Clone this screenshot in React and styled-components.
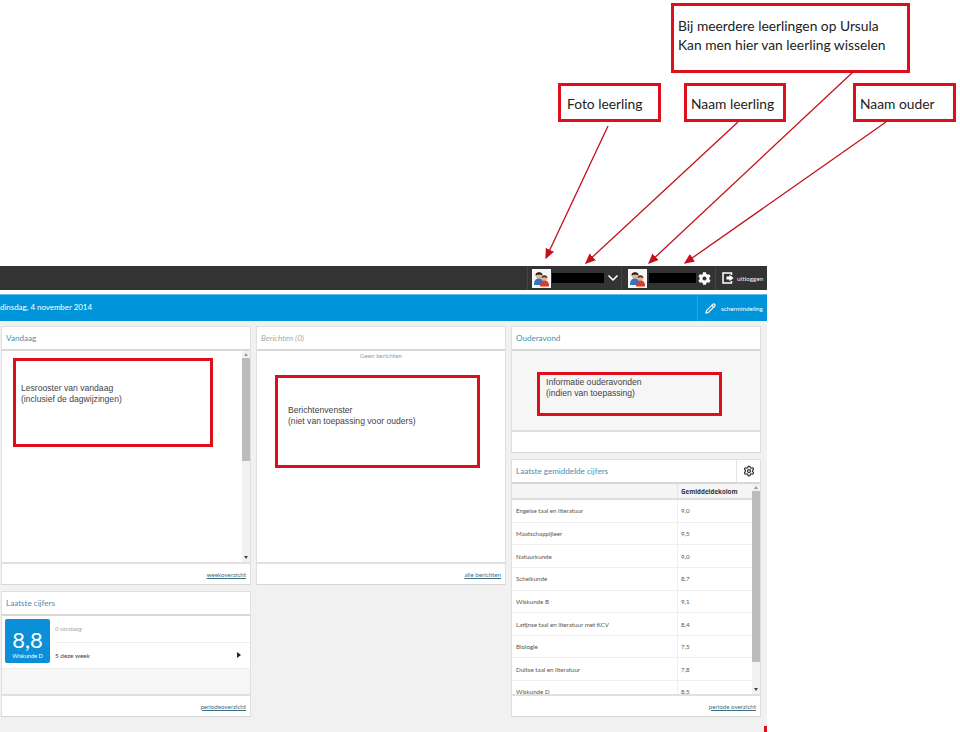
import React from "react";
import styled, { createGlobalStyle } from "styled-components";
import { ChevronDown, Settings, Pencil } from "lucide-react";
import { FaCog } from "react-icons/fa";

const GlobalStyle = createGlobalStyle`
  html, body {
    margin: 0;
    padding: 0;
    background: #fff;
    font-family: Lato, "Open Sans", "Liberation Sans", sans-serif;
  }
`;

const Page = styled.div`
  position: relative;
  width: 960px;
  height: 732px;
  overflow: hidden;
  background: #fff;
`;

const Notes = styled.div`
  height: 266px;
`;

const Callout = styled.div`
  position: absolute;
  left: ${(p) => p.$x}px;
  top: ${(p) => p.$y}px;
  width: ${(p) => p.$w}px;
  height: ${(p) => p.$h}px;
  box-sizing: border-box;
  border: 3px solid #dd0f1c;
  padding: ${(p) => p.$pad || "10px 4px"};
  font-family: Lato, "Liberation Sans", sans-serif;
  font-size: 13.8px;
  line-height: 19px;
  color: #222;
  white-space: nowrap;
`;

const Arrows = styled.svg`
  position: absolute;
  left: 0;
  top: 0;
  pointer-events: none;
`;

const Shot = styled.div`
  width: 767px;
  height: 466px;
  background: #f1f1f1;
  position: relative;
`;

const TopBar = styled.div`
  height: 24px;
  background: #333;
  display: flex;
  justify-content: flex-end;
  align-items: center;
`;

const BarGroup = styled.div`
  width: ${(p) => p.$w}px;
  height: 24px;
  box-sizing: border-box;
  border-left: 1px solid #444;
  display: flex;
  align-items: center;
  gap: ${(p) => p.$gap || 2}px;
  padding-left: ${(p) => p.$pad || 4}px;
`;

const Avatar = styled.svg`
  width: 19px;
  height: 19px;
  flex: none;
  display: block;
`;

const Redacted = styled.div`
  width: ${(p) => p.$w}px;
  height: 10px;
  flex: none;
  background: #000;
`;

const LogoutLabel = styled.span`
  font-size: 6.5px;
  color: #eee;
`;

const Gap = styled.div`
  height: 4px;
  background: #fff;
`;

const BlueBar = styled.div`
  height: 27px;
  box-sizing: border-box;
  background: #0095da;
  border-top: 1px solid #5fbde8;
  display: flex;
  align-items: center;
  justify-content: space-between;
  padding-right: 5px;
  color: #fff;
`;

const DateText = styled.span`
  font-size: 7.9px;
  margin-top: -2px;
`;

const LayoutLink = styled.div`
  height: 26px;
  box-sizing: border-box;
  width: 65px;
  border-left: 1px solid #2ba5de;
  display: flex;
  align-items: center;
  gap: 5px;
  padding-left: 7px;
  font-size: 6.3px;
  white-space: nowrap;
  svg {
    flex: none;
  }
`;

const Columns = styled.div`
  display: grid;
  grid-template-columns: repeat(3, 250px);
  gap: 5px;
  padding: 5px 0 0 1px;
`;

const Column = styled.div`
  display: flex;
  flex-direction: column;
  gap: 6px;
`;

const Panel = styled.section`
  height: ${(p) => p.$h}px;
  box-sizing: border-box;
  background: #fff;
  border: 1px solid #e0e0e0;
  border-bottom-color: #d6d6d6;
  display: flex;
  flex-direction: column;
`;

const PanelHead = styled.header`
  height: 24px;
  flex: none;
  box-sizing: border-box;
  border-bottom: 2px solid #d8d8d8;
  display: flex;
  align-items: center;
  justify-content: space-between;
`;

const PanelTitle = styled.h2`
  margin: 0;
  padding-left: 4px;
  font-size: 8.1px;
  font-weight: 400;
  color: ${(p) => (p.$muted ? "#aaa" : "#4b8fb0")};
  font-style: ${(p) => (p.$muted ? "italic" : "normal")};
`;

const HeadTool = styled.div`
  width: 23px;
  height: 22px;
  border-left: 1px solid #e4e4e4;
  display: flex;
  align-items: center;
  justify-content: center;
  color: #333;
`;

const PanelBody = styled.div`
  flex: 1;
  min-height: 0;
  position: relative;
  background: ${(p) => p.$bg || "#fff"};
  overflow: hidden;
`;

const PanelFoot = styled.footer`
  height: 22px;
  flex: none;
  box-sizing: border-box;
  border-top: 2px solid #e0e0e0;
  display: flex;
  align-items: center;
  justify-content: flex-end;
  padding-right: 4px;
`;

const FootLink = styled.a`
  font-size: 6.2px;
  color: #3d6d84;
  text-decoration: underline;
`;

const Scrollbar = styled.div`
  position: absolute;
  right: 0;
  top: 0;
  bottom: 0;
  width: 8px;
  background: #f1f1f1;
  &::before {
    content: "";
    position: absolute;
    left: 2px;
    top: 2px;
    border: 2px solid transparent;
    border-bottom: 3px solid #999;
    border-top: 0;
  }
  &::after {
    content: "";
    position: absolute;
    left: 2px;
    bottom: 3px;
    border: 2px solid transparent;
    border-top: 3px solid #444;
    border-bottom: 0;
  }
`;

const ScrollThumb = styled.div`
  margin-top: 7px;
  height: ${(p) => p.$h}px;
  background: #bcbcbc;
`;

const RedBox = styled.div`
  position: absolute;
  left: ${(p) => p.$x}px;
  top: ${(p) => p.$y}px;
  width: ${(p) => p.$w}px;
  height: ${(p) => p.$h}px;
  box-sizing: border-box;
  border: 3px solid #dd0f1c;
  padding: ${(p) => p.$pad};
  font-family: "Liberation Sans", Arial, sans-serif;
  font-size: 8.6px;
  line-height: 10.5px;
  color: #444;
  white-space: nowrap;
`;

const EmptyNote = styled.div`
  padding-top: 1px;
  text-align: center;
  font-size: 6.2px;
  color: #999;
`;

const GradeRow = styled.div`
  display: flex;
  height: 52px;
  background: #fff;
  border-bottom: 1px solid #eee;
`;

const GradeCell = styled.div`
  margin: 3px 0 0 3px;
  width: 45px;
  height: 44px;
  border-radius: 2px;
  background: #0a8fd8;
  color: #fff;
  display: flex;
  flex-direction: column;
  align-items: center;
  justify-content: center;
  flex: none;
`;

const GradeValue = styled.span`
  font-size: 22px;
  line-height: 25px;
  margin-top: 3px;
`;

const GradeSubject = styled.span`
  font-size: 5.6px;
`;

const GradeLines = styled.div`
  flex: 1;
  margin-left: 5px;
  display: flex;
  flex-direction: column;
`;

const GradeLine = styled.div`
  flex: 1;
  display: flex;
  align-items: center;
  justify-content: space-between;
  padding-right: 9px;
  font-size: 6.4px;
  color: ${(p) => (p.$muted ? "#aaa" : "#444")};
  font-style: ${(p) => (p.$muted ? "italic" : "normal")};
  & + & {
    border-top: 1px solid #eee;
  }
`;

const PlayMark = styled.span`
  border-left: 4px solid #222;
  border-top: 3px solid transparent;
  border-bottom: 3px solid transparent;
`;

const TableHead = styled.div`
  height: 16px;
  box-sizing: border-box;
  margin-right: 8px;
  border-bottom: 2px solid #ddd;
  background: #f5f5f5;
  display: grid;
  grid-template-columns: 165px 1fr;
`;

const HeadCell = styled.div`
  border-left: ${(p) => (p.$line ? "1px solid #e6e6e6" : "0")};
  padding-left: 3px;
  font-family: "Open Sans", sans-serif;
  font-size: 6.2px;
  font-weight: 700;
  line-height: 15px;
  color: #333;
`;

const TableRow = styled.div`
  height: 22.65px;
  box-sizing: border-box;
  margin-right: 8px;
  border-bottom: 1px solid #f0f0f0;
  display: grid;
  grid-template-columns: 165px 1fr;
  align-items: stretch;
  font-size: 6.2px;
  color: #555;
`;

const RowCell = styled.div`
  display: flex;
  align-items: center;
  padding-left: ${(p) => (p.$line ? 3 : 4)}px;
  border-left: ${(p) => (p.$line ? "1px solid #eee" : "0")};
`;

const Corner = styled.div`
  position: absolute;
  right: 0;
  bottom: 0;
  width: 3px;
  height: 6px;
  background: #dd0f1c;
`;

const averages = [
  ["Engelse taal en literatuur", "9,0"],
  ["Maatschappijleer", "9,5"],
  ["Natuurkunde", "9,0"],
  ["Scheikunde", "8,7"],
  ["Wiskunde B", "9,1"],
  ["Latijnse taal en literatuur met KCV", "8,4"],
  ["Biologie", "7,5"],
  ["Duitse taal en literatuur", "7,8"],
  ["Wiskunde D", "8,5"],
];

const arrows = [
  [608, 126, 546, 258],
  [738, 122, 586, 263],
  [853, 72, 649, 263],
  [886, 122, 685, 263],
];

function Kids() {
  return (
    <Avatar viewBox="0 0 19 19">
      <rect width="19" height="19" fill="#f6f6f6" />
      <circle cx="7" cy="6.5" r="3.2" fill="#e8b48f" />
      <path d="M3.4 6.6C3.2 2.2 10.8 2.2 10.6 6.6 8 5 6 5 3.4 6.6z" fill="#222" />
      <path d="M2 16c0-5 2.2-6.4 5-6.4s4.5 1.6 4.5 6.4z" fill="#2f74c8" />
      <circle cx="12.5" cy="9" r="2.8" fill="#e8b48f" />
      <path d="M9.5 9.2c-.2-4 6.2-4 6 0-2-1.2-4-1.2-6 0z" fill="#5a3018" />
      <path d="M8 17.5c0-4.8 2-6 4.6-6s4.4 1.2 4.4 6z" fill="#dd3a2a" />
    </Avatar>
  );
}

function LogoutIcon() {
  return (
    <svg width="12" height="12" viewBox="0 0 12 12" fill="none">
      <path d="M9.5 3V1H1v10h8.5V9" stroke="#fff" strokeWidth="1.5" />
      <path d="M4.5 4.6h3V2.8L11.6 6 7.5 9.2V7.4h-3z" fill="#fff" />
    </svg>
  );
}

export default function App() {
  return (
    <Page>
      <GlobalStyle />
      <Notes>
        <Callout $x={671} $y={3} $w={239} $h={70}>
          Bij meerdere leerlingen op Ursula
          <br />
          Kan men hier van leerling wisselen
        </Callout>
        <Callout $x={558} $y={83} $w={103} $h={39} $pad="8px 6px">
          Foto leerling
        </Callout>
        <Callout $x={684} $y={83} $w={102} $h={39} $pad="8px 4px">
          Naam leerling
        </Callout>
        <Callout $x={853} $y={83} $w={103} $h={39} $pad="8px 4px">
          Naam ouder
        </Callout>
      </Notes>
      <Shot>
        <TopBar>
          <BarGroup $w={94} $gap={1}>
            <Kids />
            <Redacted $w={52} />
            <ChevronDown size={16} color="#fff" strokeWidth={2.5} />
          </BarGroup>
          <BarGroup $w={94} $pad={6} $gap={2}>
            <Kids />
            <Redacted $w={47} />
            <FaCog size={13} color="#fff" />
          </BarGroup>
          <BarGroup $w={52} $gap={3} $pad={6}>
            <LogoutIcon />
            <LogoutLabel>uitloggen</LogoutLabel>
          </BarGroup>
        </TopBar>
        <Gap />
        <BlueBar>
          <DateText>dinsdag, 4 november 2014</DateText>
          <LayoutLink>
            <Pencil size={11} color="#fff" strokeWidth={2.5} />
            schermindeling
          </LayoutLink>
        </BlueBar>
        <Columns>
          <Column>
            <Panel $h={259}>
              <PanelHead>
                <PanelTitle>Vandaag</PanelTitle>
              </PanelHead>
              <PanelBody>
                <Scrollbar>
                  <ScrollThumb $h={103} />
                </Scrollbar>
                <RedBox $x={11} $y={7} $w={200} $h={89} $pad="22px 5px">
                  Lesrooster van vandaag
                  <br />
                  (inclusief de dagwijzingen)
                </RedBox>
              </PanelBody>
              <PanelFoot>
                <FootLink>weekoverzicht</FootLink>
              </PanelFoot>
            </Panel>
            <Panel $h={126}>
              <PanelHead>
                <PanelTitle>Laatste cijfers</PanelTitle>
              </PanelHead>
              <PanelBody $bg="#f6f6f6">
                <GradeRow>
                  <GradeCell>
                    <GradeValue>8,8</GradeValue>
                    <GradeSubject>Wiskunde D</GradeSubject>
                  </GradeCell>
                  <GradeLines>
                    <GradeLine $muted>0 verslaag</GradeLine>
                    <GradeLine>
                      5 deze week
                      <PlayMark />
                    </GradeLine>
                  </GradeLines>
                </GradeRow>
              </PanelBody>
              <PanelFoot>
                <FootLink>periodeoverzicht</FootLink>
              </PanelFoot>
            </Panel>
          </Column>
          <Column>
            <Panel $h={259}>
              <PanelHead>
                <PanelTitle $muted>Berichten (0)</PanelTitle>
              </PanelHead>
              <PanelBody>
                <EmptyNote>Geen berichten</EmptyNote>
                <RedBox $x={18} $y={24} $w={205} $h={93} $pad="27px 10px">
                  Berichtenvenster
                  <br />
                  (niet van toepassing voor ouders)
                </RedBox>
              </PanelBody>
              <PanelFoot>
                <FootLink>alle berichten</FootLink>
              </PanelFoot>
            </Panel>
          </Column>
          <Column>
            <Panel $h={127}>
              <PanelHead>
                <PanelTitle>Ouderavond</PanelTitle>
              </PanelHead>
              <PanelBody $bg="#f6f6f6">
                <RedBox $x={25} $y={21} $w={185} $h={44} $pad="2px 6px">
                  Informatie ouderavonden
                  <br />
                  (indien van toepassing)
                </RedBox>
              </PanelBody>
              <PanelFoot />
            </Panel>
            <Panel $h={258}>
              <PanelHead>
                <PanelTitle>Laatste gemiddelde cijfers</PanelTitle>
                <HeadTool>
                  <Settings size={12} strokeWidth={2.5} />
                </HeadTool>
              </PanelHead>
              <PanelBody>
                <Scrollbar>
                  <ScrollThumb $h={171} />
                </Scrollbar>
                <TableHead>
                  <HeadCell />
                  <HeadCell $line>Gemiddeldekolom</HeadCell>
                </TableHead>
                {averages.map(([subject, grade]) => (
                  <TableRow key={subject}>
                    <RowCell>{subject}</RowCell>
                    <RowCell $line>{grade}</RowCell>
                  </TableRow>
                ))}
              </PanelBody>
              <PanelFoot>
                <FootLink>periode overzicht</FootLink>
              </PanelFoot>
            </Panel>
          </Column>
        </Columns>
        <Corner />
      </Shot>
      <Arrows width="960" height="732" viewBox="0 0 960 732">
        <defs>
          <marker id="head" markerWidth="8" markerHeight="8" refX="7" refY="4" orient="auto">
            <path d="M0 0.5L8 4 0 7.5z" fill="#c4101c" />
          </marker>
        </defs>
        {arrows.map(([x1, y1, x2, y2]) => (
          <line
            key={x1}
            x1={x1}
            y1={y1}
            x2={x2}
            y2={y2}
            stroke="#c4101c"
            strokeWidth="1.3"
            markerEnd="url(#head)"
          />
        ))}
      </Arrows>
    </Page>
  );
}
